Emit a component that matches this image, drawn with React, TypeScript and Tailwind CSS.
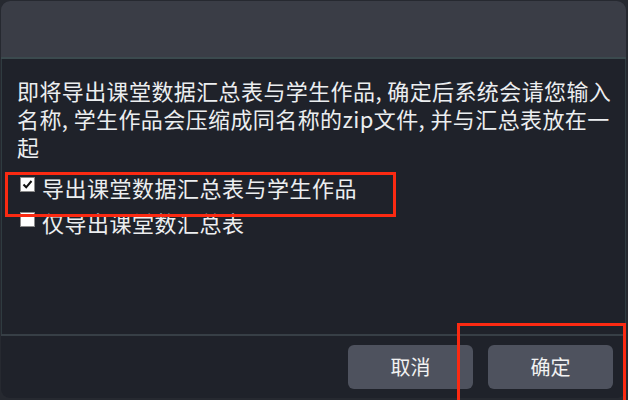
import React from "react";

const font = { fontFamily: '"Microsoft YaHei", "Noto Sans CJK SC", "Noto Sans", sans-serif' };

export default function App() {
  return (
    <div className="relative w-[628px] h-[400px] overflow-hidden bg-[#262930]" style={font}>
      <div className="absolute left-[1px] top-[1px] w-[625px] h-[397px] rounded-[9px] overflow-hidden flex flex-col bg-[#1f222a]">
        <div className="h-[58px] shrink-0 bg-[#3a3d46] border-b-2 border-[#3b4a4e]" />
        <div className="flex-1 border-x border-[#2f3b40] pl-[15px] pr-[4px] pt-[17px]">
          <p className="text-[22px] leading-[28px] text-[#eceef0] tracking-[0.4px] whitespace-nowrap">
            即将导出课堂数据汇总表与学生作品, 确定后系统会请您输入
            <br />
            名称, 学生作品会压缩成同名称的zip文件, 并与汇总表放在一
            <br />
            起
          </p>
          <div className="mt-[9px] flex flex-col">
            <Check checked label="导出课堂数据汇总表与学生作品" />
            <Check label="仅导出课堂数汇总表" />
          </div>
        </div>
        <div className="h-[64px] shrink-0 border-t-2 border-[#373f46] flex justify-end items-center gap-[15px] pr-[13px] pb-[1px]">
          <Btn label="取消" />
          <Btn label="确定" />
        </div>
      </div>

      {/* red annotation boxes */}
      <div className="absolute left-[5px] top-[172px] w-[391px] h-[45px] border-[3px] border-[#fb2a12]" />
      <div className="absolute left-[457px] top-[323px] w-[169px] h-[90px] border-[3px] border-[#fb2a12]" />
    </div>
  );
}

function Check({ label, checked }: { label: string; checked?: boolean }) {
  return (
    <label className="flex items-center h-[35px] gap-[7px]">
      <span className="w-[15px] h-[15px] mt-[-4px] ml-[3px] bg-white border border-[#8a8a8a] flex items-center justify-center shrink-0">
        {checked && (
          <svg width="11" height="11" viewBox="0 0 11 11">
            <path d="M1.5 5.5 L4.2 8.3 L9.5 2" stroke="#111" strokeWidth="2" fill="none" />
          </svg>
        )}
      </span>
      <span className="text-[22px] leading-[28px] text-[#eceef0] tracking-[0.5px]">{label}</span>
    </label>
  );
}

function Btn({ label }: { label: string }) {
  return (
    <button className="w-[125px] h-[44px] rounded-[6px] bg-[#4e525e] text-[20px] text-[#f2f2f2]">
      {label}
    </button>
  );
}
